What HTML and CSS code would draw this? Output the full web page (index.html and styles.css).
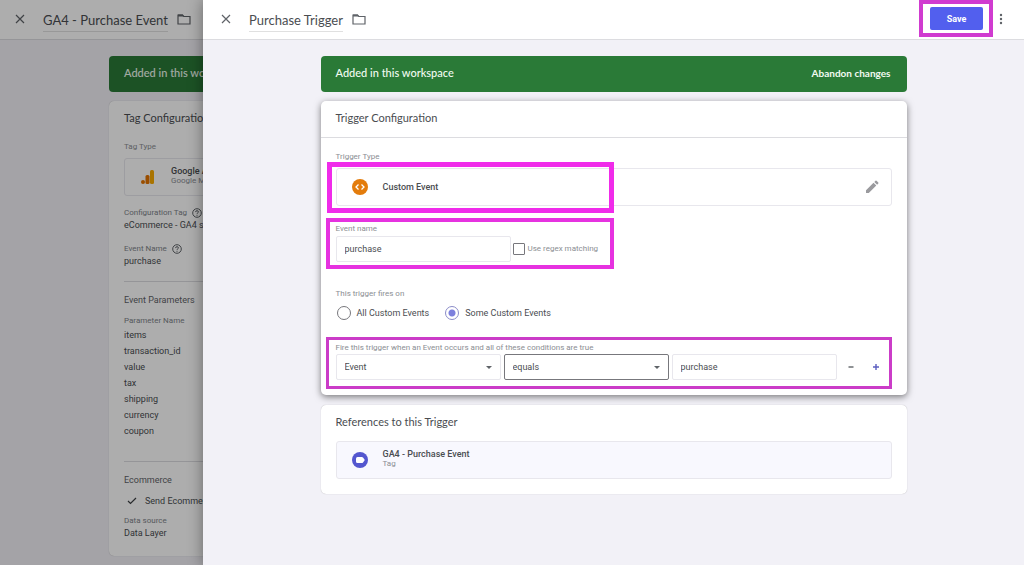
FILE: index.html
```html
<!DOCTYPE html>
<html lang="en">
<head>
  <meta charset="UTF-8">
  <meta name="viewport" content="width=device-width, initial-scale=1.0">
  <title>Purchase Trigger</title>
  <link rel="stylesheet" href="styles.css">
</head>
<body>
  <!-- Tag editor, behind the drawer -->
  <div class="sheet tag-sheet">
    <header class="topbar">
      <button class="icon-btn" type="button" aria-label="Close tag">
        <svg width="10" height="10" viewBox="0 0 10 10"><path d="M1 1l8 8M9 1l-8 8" fill="none" stroke="#5f6368" stroke-width="1.200"/></svg>
      </button>
      <h1 class="title">GA4 - Purchase Event</h1>
      <svg class="folder" width="14" height="12" viewBox="0 0 14 12"><path d="M1 2h4.500l1.300 1.500H13V11H1z" fill="none" stroke="#5f6368" stroke-width="1.200"/><path d="M1 1.500h4.800l1.200 2H1z" fill="#5f6368"/></svg>
    </header>
    <main class="content wide">
      <div class="banner"><span>Added in this workspace</span></div>
      <section class="card flat">
        <h2 class="card-title">Tag Configuration</h2>
        <div class="tag-body">
          <span class="label">Tag Type</span>
          <div class="type-box">
            <svg class="type-icon" width="16" height="16" viewBox="0 0 16 16"><rect x="10" y="1" width="4" height="14" rx="1.500" fill="#f9ab00"/><rect x="5.500" y="6" width="4" height="9" rx="1.500" fill="#e37400"/><circle cx="3" cy="13" r="2" fill="#e37400"/></svg>
            <div class="type-text">
              <strong>Google Analytics: GA4 Event</strong>
              <span class="label">Google Marketing Platform</span>
            </div>
          </div>
          <dl class="facts">
            <dt>Configuration Tag
              <svg class="help" width="10" height="10" viewBox="0 0 10 10"><circle cx="5" cy="5" r="4.300" fill="none" stroke="#5f6368"/><path d="M3.600 4.100q0-1.400 1.400-1.400t1.400 1.200q0 .7-.8 1.100-.6.300-.6 1M5 6.800v1" fill="none" stroke="#5f6368"/></svg>
            </dt>
            <dd>eCommerce - GA4 settings</dd>
            <dt>Event Name
              <svg class="help" width="10" height="10" viewBox="0 0 10 10"><circle cx="5" cy="5" r="4.300" fill="none" stroke="#5f6368"/><path d="M3.600 4.100q0-1.400 1.400-1.400t1.400 1.200q0 .7-.8 1.100-.6.300-.6 1M5 6.800v1" fill="none" stroke="#5f6368"/></svg>
            </dt>
            <dd>purchase</dd>
          </dl>
          <div class="part">
            <h3 class="part-title">Event Parameters</h3>
            <table class="params">
              <thead><tr><th>Parameter Name</th></tr></thead>
              <tbody>
                <tr><td>items</td></tr>
                <tr><td>transaction_id</td></tr>
                <tr><td>value</td></tr>
                <tr><td>tax</td></tr>
                <tr><td>shipping</td></tr>
                <tr><td>currency</td></tr>
                <tr><td>coupon</td></tr>
              </tbody>
            </table>
          </div>
          <div class="part">
            <h3 class="part-title">Ecommerce</h3>
            <p class="checked">
              <svg width="10" height="8" viewBox="0 0 10 8"><path d="M1 4l2.500 2.500L9 1" fill="none" stroke="#3c4043" stroke-width="1.200"/></svg>
              Send Ecommerce data
            </p>
            <dl class="facts source">
              <dt>Data source</dt>
              <dd>Data Layer</dd>
            </dl>
          </div>
        </div>
      </section>
    </main>
  </div>
  <div class="scrim"></div>

  <!-- Trigger editor drawer -->
  <div class="sheet drawer">
    <header class="topbar">
      <button class="icon-btn" type="button" aria-label="Close trigger">
        <svg width="10" height="10" viewBox="0 0 10 10"><path d="M1 1l8 8M9 1l-8 8" fill="none" stroke="#5f6368" stroke-width="1.200"/></svg>
      </button>
      <h1 class="title">Purchase Trigger</h1>
      <svg class="folder" width="14" height="12" viewBox="0 0 14 12"><path d="M1 2h4.500l1.300 1.500H13V11H1z" fill="none" stroke="#5f6368" stroke-width="1.200"/><path d="M1 1.500h4.800l1.200 2H1z" fill="#5f6368"/></svg>
      <div class="actions">
        <div class="marked">
          <button class="save" type="button">Save</button>
          <span class="mark mark-save"></span>
        </div>
        <button class="icon-btn more" type="button" aria-label="More actions">
          <svg width="4" height="12" viewBox="0 0 4 12"><g fill="#5f6368"><circle cx="2" cy="2" r="1.200"/><circle cx="2" cy="6" r="1.200"/><circle cx="2" cy="10" r="1.200"/></g></svg>
        </button>
      </div>
    </header>
    <main class="content">
      <div class="banner">
        <span>Added in this workspace</span>
        <button class="abandon" type="button">Abandon changes</button>
      </div>

      <section class="card raised">
        <h2 class="card-title lined">Trigger Configuration</h2>
        <div class="card-body">
          <span class="label">Trigger Type</span>
          <div class="type-box marked">
            <svg class="type-icon" width="16" height="16" viewBox="0 0 16 16"><circle cx="8" cy="8" r="8" fill="#e37c0c"/><path d="M6.500 5.500L4 8l2.500 2.500M9.500 5.500L12 8l-2.500 2.500" fill="none" stroke="#fff" stroke-width="1.300"/></svg>
            <strong>Custom Event</strong>
            <button class="icon-btn edit" type="button" aria-label="Edit trigger type">
              <svg width="14" height="14" viewBox="0 0 14 14"><path d="M1 13v-2.800l7.500-7.500 2.800 2.800L3.800 13zM9.300 1.900l1.200-1.200q.5-.4 1 0l1.800 1.800q.4.500 0 1l-1.200 1.200z" fill="#9a9a9e"/></svg>
            </button>
            <span class="mark mark-type"></span>
          </div>

          <div class="event-name marked">
            <label class="label" for="event-name">Event name</label>
            <div class="row">
              <input class="field name-field" id="event-name" type="text" value="purchase">
              <input class="check" id="regex" type="checkbox">
              <label class="label" for="regex">Use regex matching</label>
            </div>
            <span class="mark mark-name"></span>
          </div>

          <fieldset class="fires">
            <legend class="label">This trigger fires on</legend>
            <label class="option"><input type="radio" name="fires"> All Custom Events</label>
            <label class="option"><input type="radio" name="fires" checked> Some Custom Events</label>
          </fieldset>

          <div class="conditions marked">
            <span class="label" id="cond-label">Fire this trigger when an Event occurs and all of these conditions are true</span>
            <div class="row cond-row" role="group" aria-labelledby="cond-label">
              <div class="select">
                <select class="field" aria-label="Variable"><option>Event</option></select>
                <svg class="caret" width="6" height="3" viewBox="0 0 6 3"><path d="M0 0h6L3 3z" fill="#5f6368"/></svg>
              </div>
              <div class="select">
                <select class="field active" aria-label="Operator"><option>equals</option></select>
                <svg class="caret" width="6" height="3" viewBox="0 0 6 3"><path d="M0 0h6L3 3z" fill="#5f6368"/></svg>
              </div>
              <input class="field" type="text" value="purchase" aria-label="Value">
              <button class="step" type="button" aria-label="Remove condition">
                <svg width="6" height="6" viewBox="0 0 6 6"><path d="M.5 3h5" stroke="#5f6368" stroke-width="1.400"/></svg>
              </button>
              <button class="step" type="button" aria-label="Add condition">
                <svg width="6" height="6" viewBox="0 0 6 6"><path d="M0 3h6M3 0v6" stroke="#5c5fc0" stroke-width="1.400"/></svg>
              </button>
            </div>
            <span class="mark mark-cond"></span>
          </div>
        </div>
      </section>

      <section class="card refs">
        <h2 class="card-title">References to this Trigger</h2>
        <a class="type-box ref" href="#">
          <svg class="type-icon" width="16" height="16" viewBox="0 0 16 16"><circle cx="8" cy="8" r="8" fill="#5457cf"/><path d="M5.500 5h4.300q.7 0 1.200.6L12.800 8 11 10.400q-.5.600-1.200.6H5.500Q4 11 4 9.500v-3Q4 5 5.500 5z" fill="#fff"/></svg>
          <div class="type-text">
            <strong>GA4 - Purchase Event</strong>
            <span class="label">Tag</span>
          </div>
        </a>
      </section>
    </main>
  </div>
</body>
</html>
```

FILE: styles.css
```css
* {
  box-sizing: border-box;
}
body {
  margin: 0;
  min-height: 100vh;
  position: relative;
  overflow: hidden;
  font-family: Roboto, sans-serif;
  font-size: 9px;
  line-height: 12px;
  color: #4a4d51;
}
h1, h2, h3, p, dl, dd {
  margin: 0;
  font-weight: 400;
}
button {
  font-family: inherit;
  border: 0;
  padding: 0;
  background: none;
  cursor: pointer;
}
strong {
  font-weight: 500;
}
svg {
  display: block;
  flex: none;
}
.sheet {
  min-height: 100vh;
  background: #f2f1f7;
}
.scrim {
  position: absolute;
  inset: 0;
  background: rgba(0, 0, 0, 0.32);
}
.drawer {
  position: absolute;
  inset: 0 0 0 203px;
  box-shadow: 0 0 14px rgba(0, 0, 0, 0.4);
}

/* top bar */
.topbar {
  display: flex;
  align-items: center;
  height: 40px;
  padding: 0 21px 2px 15px;
  background: #fff;
  border-bottom: 1px solid #dcdce0;
}
.icon-btn {
  display: flex;
}
.title {
  margin: 0 9px 0 18px;
  padding: 7px 0 3px;
  border-bottom: 1px solid #e0e0e0;
  font-family: Lato, sans-serif;
  font-size: 13px;
  line-height: 16px;
}
.drawer .topbar {
  padding-left: 18px;
}
.actions {
  display: flex;
  align-items: center;
  gap: 16px;
  margin-left: auto;
}
.save {
  display: block;
  width: 53px;
  height: 23px;
  border-radius: 2px;
  background: #525fee;
  color: #fff;
  font-size: 9px;
  font-weight: 700;
}

/* cards */
.content {
  max-width: 586px;
  margin: 0 auto;
  padding-top: 16px;
}
.wide {
  max-width: 806px;
}
.banner {
  display: flex;
  justify-content: space-between;
  align-items: center;
  height: 36px;
  padding: 0 16px 3px 15px;
  border-radius: 4px;
  background: #2a7a37;
  color: #f1faf1;
  font-family: Lato, sans-serif;
  font-size: 11px;
  font-weight: 500;
}
.abandon {
  color: inherit;
  font-family: Lato, sans-serif;
  font-size: 10px;
  font-weight: 700;
}
.card {
  margin-top: 9px;
  border-radius: 5px;
  background: #fff;
  box-shadow: 0 0 1px rgba(0, 0, 0, 0.3);
}
.raised {
  box-shadow: 0 2px 7px rgba(0, 0, 0, 0.5);
}
.card-title {
  padding: 8px 15px 10px;
  font-family: Lato, sans-serif;
  font-size: 11px;
  line-height: 18px;
}
.lined {
  border-bottom: 1px solid #dcdce0;
}
.card-body {
  padding: 13px 15px 15px;
}
.label {
  display: block;
  color: #8b8e93;
  font-size: 8px;
  line-height: 12px;
}
.type-box {
  display: flex;
  align-items: center;
  height: 38px;
  margin-top: 5px;
  padding: 0 12px 0 15px;
  border: 1px solid #e8e7ed;
  border-radius: 3px;
}
.type-icon {
  margin-right: 15px;
}
.type-text {
  padding-bottom: 2px;
  line-height: 10px;
}
.type-text .label {
  line-height: 10px;
}
.edit {
  margin-left: auto;
}
.refs {
  margin-top: 10px;
  padding-bottom: 15px;
}
.ref {
  margin: 0 15px;
  background: #f8f8fe;
  color: inherit;
  text-decoration: none;
}

/* trigger form */
.row {
  display: flex;
  align-items: center;
}
.field {
  width: 165px;
  height: 26px;
  padding: 0 8px;
  border: 1px solid #e8e7ed;
  border-radius: 2px;
  background: #fff;
  color: #4a4d51;
  font-family: inherit;
  font-size: 9px;
  appearance: none;
}
.active {
  border-color: #77777c;
}
.event-name {
  margin-top: 17px;
}
.event-name .row {
  margin-top: 1px;
}
.name-field {
  width: 175px;
}
.check {
  appearance: none;
  width: 12px;
  height: 12px;
  margin: 0 3px 0 2px;
  border: 1px solid #77777c;
  border-radius: 1px;
}
.fires {
  display: flex;
  gap: 15px;
  margin: 26px 0 0;
  padding: 0;
  border: 0;
}
.fires legend {
  margin-bottom: 6px;
  padding: 0;
}
.option {
  display: flex;
  align-items: center;
  gap: 6px;
  height: 14px;
}
.option input {
  appearance: none;
  width: 14px;
  height: 14px;
  margin: 0 0 0 1px;
  border: 1px solid #77777c;
  border-radius: 50%;
}
.option input:checked {
  border-color: #8b8cc8;
  background: radial-gradient(circle, #7d80dd 3px, #fff 4px);
}
.conditions {
  margin-top: 22px;
}
.cond-row {
  gap: 3px;
}
.select {
  position: relative;
}
.caret {
  position: absolute;
  right: 9px;
  top: 12px;
}
.step {
  display: flex;
  justify-content: center;
  width: 22px;
}

/* pink callout frames */
.marked {
  position: relative;
}
.mark {
  position: absolute;
  border: 4px solid #e632e0;
  pointer-events: none;
}
.mark-save {
  inset: -7px -10px -7px -11px;
  border-color: #d03bd0;
}
.mark-type {
  top: -7px;
  left: -10px;
  width: 287px;
  height: 51px;
  border-width: 5px;
  border-color: #f02bea;
}
.mark-name {
  inset: -5px auto -7px -10px;
  width: 288px;
}
.mark-cond {
  inset: -5px 0 -9px -10px;
  border-width: 3px;
  border-color: #cb3cc8;
}

/* tag card */
.flat {
  min-height: 455px;
}
.tag-body {
  padding: 4px 15px 15px;
}
.tag-body .type-box {
  white-space: nowrap;
}
.facts {
  margin-top: 11px;
}
.facts dt {
  display: flex;
  align-items: center;
  gap: 5px;
  color: #80848a;
  font-size: 8px;
}
.facts dd {
  margin-bottom: 12px;
}
.part {
  margin-top: 14px;
  padding-top: 12px;
  border-top: 1px solid #dcdce0;
}
.part-title {
  color: #5f6368;
  font-size: 9px;
}
.params {
  margin: 9px 0 22px;
  border-collapse: collapse;
  text-align: left;
}
.params th {
  padding: 0;
  color: #80848a;
  font-size: 8px;
  font-weight: 400;
}
.params td {
  padding: 0;
  line-height: 16px;
}
.checked {
  display: flex;
  align-items: center;
  gap: 8px;
  margin-top: 9px;
  padding-left: 3px;
}
.source {
  margin-top: 8px;
}
.source dd {
  margin-bottom: 0;
}
```
